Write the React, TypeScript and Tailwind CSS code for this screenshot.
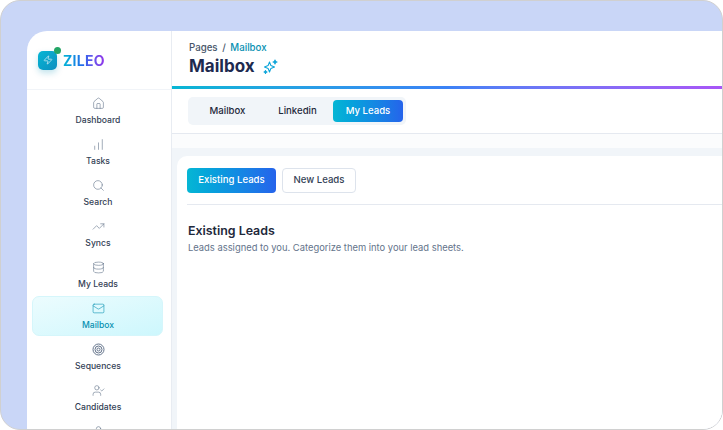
import { ChartNoAxesColumnIncreasing, Database, House, Mail, Search, TrendingUp, User, UserCheck, Zap } from "lucide-react";

const font = { fontFamily: "Inter, 'Open Sans', sans-serif" };

const navItems = [
  { label: "Dashboard", icon: House },
  { label: "Tasks", icon: ChartNoAxesColumnIncreasing },
  { label: "Search", icon: Search },
  { label: "Syncs", icon: TrendingUp },
  { label: "My Leads", icon: Database },
  { label: "Mailbox", icon: Mail, active: true },
  { label: "Sequences", icon: null },
  { label: "Candidates", icon: UserCheck },
  { label: "", icon: User },
];

function TargetIcon() {
  return (
    <svg width="13" height="13" viewBox="0 0 13 13" fill="none" stroke="#64748b" strokeWidth="1">
      <circle cx="6.5" cy="6.5" r="5.5" />
      <circle cx="6.5" cy="6.5" r="3.5" />
      <circle cx="6.5" cy="6.5" r="1.5" />
    </svg>
  );
}

function SparkleIcon() {
  return (
    <svg width="15" height="15" viewBox="0 0 15 15" fill="none" stroke="#0ea5d9" strokeWidth="1.1" strokeLinejoin="round">
      <path d="M6.5 3 L7.9 6.6 L11.5 8 L7.9 9.4 L6.5 13 L5.1 9.4 L1.5 8 L5.1 6.6 Z" />
      <path d="M12 1 L12.5 2.5 L14 3 L12.5 3.5 L12 5 L11.5 3.5 L10 3 L11.5 2.5 Z" fill="#0ea5d9" />
      <path d="M2.5 11.5 L2.9 12.6 L4 13 L2.9 13.4 L2.5 14.5 L2.1 13.4 L1 13 L2.1 12.6 Z" fill="#0ea5d9" />
    </svg>
  );
}

function Sidebar() {
  return (
    <aside className="w-[145px] shrink-0 bg-white border-r border-[#e8ecf2] rounded-tl-[20px] flex flex-col">
      <div className="h-[59px] border-b border-[#f1f4f8] flex items-center pl-[11px] gap-[6px] shrink-0">
        <div className="relative w-[19px] h-[19px] rounded-[5px] bg-gradient-to-br from-[#06b6d4] to-[#0e8fc0] flex items-center justify-center shadow-[0_3px_6px_rgba(8,145,178,0.25)]">
          <Zap size={10} className="text-white" strokeWidth={1.5} />
          <span className="absolute -top-[4px] -right-[4px] w-[7px] h-[7px] rounded-full bg-[#22a565]" />
        </div>
        <span className="text-[14px] font-bold tracking-[0.3px] bg-gradient-to-r from-[#06b6d4] via-[#2563eb] to-[#9333ea] bg-clip-text text-transparent">
          ZILEO
        </span>
      </div>
      <nav className="flex flex-col items-stretch pl-[5px] pr-[8px]">
        {navItems.map((item) => (
          <div
            key={item.label}
            className={
              item.active
                ? "h-[40px] mt-[1px] pl-px rounded-[7px] border border-[#d5f6fb] bg-gradient-to-br from-[#ecfcfe] to-[#cdf7fd] flex flex-col items-center pt-[5px] gap-[5px]"
                : "h-[41px] pl-px flex flex-col items-center pt-[7px] gap-[5px]"
            }
          >
            {item.icon ? (
              <item.icon size={13} strokeWidth={1.1} className={item.active ? "text-[#0891b2]" : "text-[#64748b]"} />
            ) : (
              <TargetIcon />
            )}
            {item.label && (
              <span className={"text-[8.6px] leading-[11px] font-medium " + (item.active ? "text-[#0891b2]" : "text-[#334155]")}>
                {item.label}
              </span>
            )}
          </div>
        ))}
      </nav>
    </aside>
  );
}

export default function App() {
  return (
    <div style={font} className="w-[723px] h-[430px] overflow-hidden bg-white">
      <div className="w-[723px] h-[430px] rounded-[20px] border border-[#d0d0d0] bg-[#c9d6f7] pl-[26px] pt-[30px] flex overflow-hidden">
        <Sidebar />
        <main className="flex-1 min-w-0 bg-white flex flex-col">
          <header className="h-[55px] pl-[17px] pt-[10px] shrink-0">
            <div className="text-[9.7px] leading-[13px] font-medium text-[#475569]">
              Pages <span className="mx-[2px]">/</span> <span className="text-[#0891b2]">Mailbox</span>
            </div>
            <div className="mt-[1px] flex items-center gap-[8px]">
              <h1 className="text-[17px] leading-[22px] font-bold text-[#1e2a4f]">Mailbox</h1>
              <SparkleIcon />
            </div>
          </header>
          <div className="h-[3px] shrink-0 bg-gradient-to-r from-[#06b6d4] via-[#3b82f6] to-[#a855f7]" />
          <div className="h-[45px] shrink-0 border-b border-[#e5e9f0] pl-[16px] pt-[8px]">
            <div className="w-[218px] h-[28px] rounded-[5px] bg-[#f1f5f9] flex items-center pl-[5px] text-[9.6px] font-medium text-[#1e293b]">
              <span className="w-[69px] text-center">Mailbox</span>
              <span className="w-[71px] text-center">Linkedin</span>
              <span className="w-[70px] h-[22px] rounded-[4px] bg-gradient-to-r from-[#06b6d4] to-[#2563eb] text-white flex items-center justify-center">
                My Leads
              </span>
            </div>
          </div>
          <div className="h-[14px] shrink-0 bg-[#fbfcfd]" />
          <div className="flex-1 bg-[#f1f5f9] pl-[5px] pt-[8px] min-h-0">
            <div className="h-full bg-white rounded-tl-[10px] pl-[10px] pt-[12px]">
              <div className="flex gap-[6px] h-[37px] border-b border-[#e5e9f0]">
                <button className="h-[25px] w-[89px] rounded-[4px] bg-gradient-to-r from-[#06b6d4] to-[#2563eb] text-white text-[9.6px] font-medium">
                  Existing Leads
                </button>
                <button className="h-[25px] w-[74px] rounded-[4px] border border-[#dde3ec] bg-white text-[#334155] text-[9.6px] font-medium">
                  New Leads
                </button>
              </div>
              <h2 className="mt-[18px] ml-px text-[12.4px] leading-[16px] font-semibold text-[#1e293b]">Existing Leads</h2>
              <p className="mt-[2px] ml-px text-[9.4px] leading-[13px] text-[#64748b]">
                Leads assigned to you. Categorize them into your lead sheets.
              </p>
            </div>
          </div>
        </main>
      </div>
    </div>
  );
}
